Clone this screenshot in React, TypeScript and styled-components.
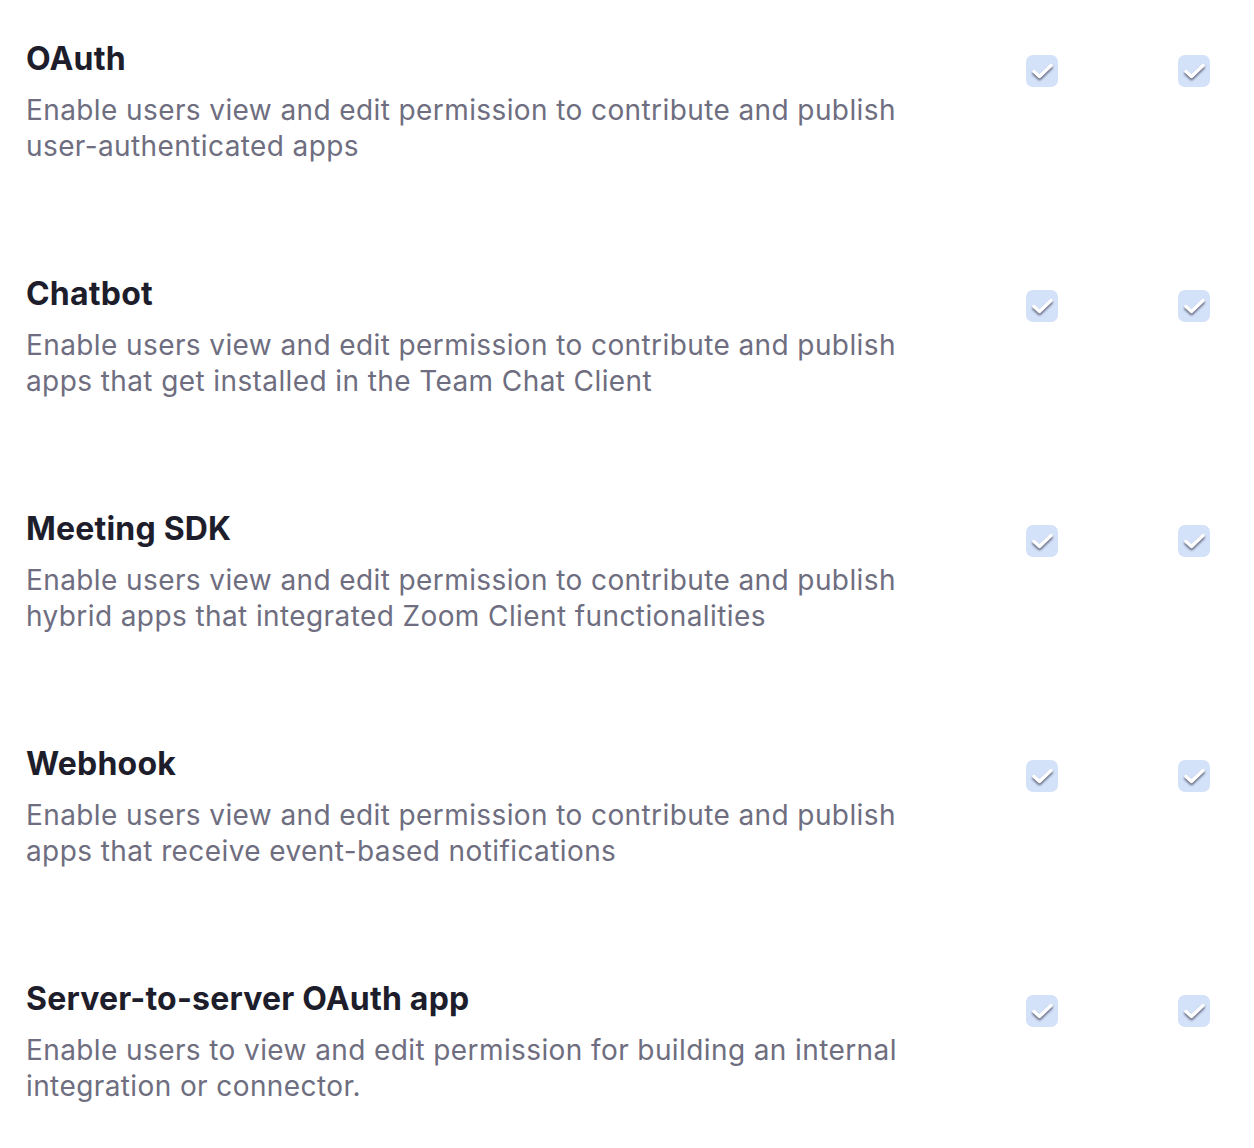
import React from "react";
import styled, { createGlobalStyle } from "styled-components";

const GlobalStyle = createGlobalStyle`
  body {
    margin: 0;
    background: #ffffff;
    font-family: Inter, "Noto Sans", sans-serif;
    -webkit-font-smoothing: antialiased;
  }
`;

const List = styled.ul`
  list-style: none;
  margin: 0;
  padding: 39px 44px 0 26px;
  display: flex;
  flex-direction: column;
  gap: 110px;
`;

const Row = styled.li`
  display: flex;
  flex-direction: row;
  align-items: flex-start;
`;

const Texts = styled.div`
  width: 900px;
  display: flex;
  flex-direction: column;
  gap: 13px;
`;

const Title = styled.h3`
  margin: 0;
  font-size: 32px;
  line-height: 40px;
  font-weight: 700;
  color: #1d1d2b;
  letter-spacing: 0.2px;
`;

const Description = styled.p`
  margin: 0;
  font-size: 28px;
  line-height: 36px;
  font-weight: 400;
  color: #6e6e80;
  letter-spacing: 0.4px;
`;

const Checks = styled.div`
  margin-left: auto;
  margin-top: 16px;
  display: flex;
  gap: 120px;
`;

const Box = styled.span`
  width: 32px;
  height: 32px;
  border-radius: 7px;
  background: #d3e1f9;
  display: block;

  svg {
    display: block;
    filter: drop-shadow(0 2px 1.2px rgba(50, 50, 70, 0.7));
  }
`;

const Check = () => (
  <Box role="checkbox" aria-checked="true">
    <svg width="32" height="32" viewBox="0 0 32 32" fill="none">
      <path
        d="M8 16.5 L13.5 21.5 L25 10.5"
        stroke="#ffffff"
        strokeWidth="3.4"
        strokeLinecap="round"
        strokeLinejoin="round"
      />
    </svg>
  </Box>
);

const items = [
  {
    title: "OAuth",
    text: "Enable users view and edit permission to contribute and publish user-authenticated apps",
  },
  {
    title: "Chatbot",
    text: "Enable users view and edit permission to contribute and publish apps that get installed in the Team Chat Client",
  },
  {
    title: "Meeting SDK",
    text: "Enable users view and edit permission to contribute and publish hybrid apps that integrated Zoom Client functionalities",
  },
  {
    title: "Webhook",
    text: "Enable users view and edit permission to contribute and publish apps that receive event-based notifications",
  },
  {
    title: "Server-to-server OAuth app",
    text: "Enable users to view and edit permission for building an internal integration or connector.",
  },
];

const App: React.FC = () => {
  return (
    <>
      <GlobalStyle />
      <List>
        {items.map((item) => (
          <Row key={item.title}>
            <Texts>
              <Title>{item.title}</Title>
              <Description>{item.text}</Description>
            </Texts>
            <Checks>
              <Check />
              <Check />
            </Checks>
          </Row>
        ))}
      </List>
    </>
  );
};

export default App;
